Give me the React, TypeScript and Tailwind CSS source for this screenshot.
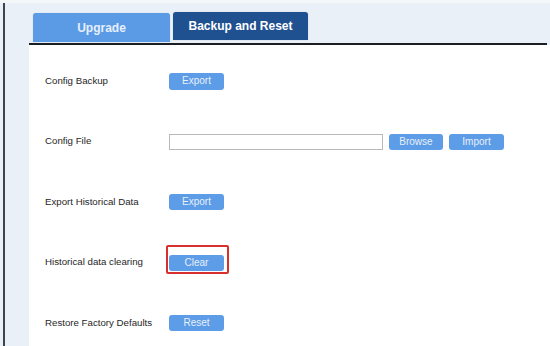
import React from "react";

const btn =
  "h-[16px] rounded-[3px] bg-[#5d9ce6] text-[#e8f0fb] text-[10px] leading-none flex items-center justify-center";

function Row({ label, children }: { label: string; children: React.ReactNode }) {
  return (
    <div className="h-[60.5px] flex items-center pl-[16px]">
      <div className="w-[124px] text-[9.7px] text-[#262626]">{label}</div>
      <div className="flex items-center">{children}</div>
    </div>
  );
}

export default function App() {
  return (
    <div
      className="w-[550px] h-[346px] bg-[#eaf0f7] flex flex-col overflow-hidden"
      style={{ fontFamily: '"Liberation Sans", Arial, sans-serif' }}
    >
      <div className="h-[3px] bg-[#f4f7fa] shrink-0" />
      <div className="flex flex-1">
        <div className="w-[3px]" />
        <div className="w-[2px] bg-[#3c4450]" />
        <div className="w-[24px]" />
        <div className="flex-1 flex flex-col">
          <div className="h-[40px] flex items-start pl-[4px] gap-[3px]">
            <div className="mt-[10px] h-[29px] w-[137px] rounded-t-[3px] bg-[#5b9be6] text-[#e6effc] text-[12px] font-bold flex items-center justify-center shadow-[0_0_1px_rgba(0,0,0,0.2)]">
              Upgrade
            </div>
            <div className="mt-[9px] h-[28px] w-[135px] rounded-t-[3px] bg-[#1f508f] text-white text-[12px] font-bold flex items-center justify-center shadow-[0_0_1px_rgba(0,0,0,0.3)]">
              Backup and Reset
            </div>
          </div>
          <div className="h-[2px] bg-[#1c1f22] mr-[3px]" />
          <div className="flex-1 bg-white pt-[6px]">
            <Row label="Config Backup">
              <div className={btn + " w-[55px] h-[17px]"}>Export</div>
            </Row>
            <Row label="Config File">
              <div className="w-[214px] h-[16px] border border-[#b9b9b9] bg-white" />
              <div className={btn + " w-[54px] ml-[6px]"}>Browse</div>
              <div className={btn + " w-[55px] ml-[6px]"}>Import</div>
            </Row>
            <Row label="Export Historical Data">
              <div className={btn + " w-[55px]"}>Export</div>
            </Row>
            <Row label="Historical data clearing">
              <div className="relative">
                <div className={btn + " w-[55px]"}>Clear</div>
                <div className="absolute left-[-3px] top-[-10px] w-[63px] h-[29px] border-2 border-[#d7302e] rounded-[2px]" />
              </div>
            </Row>
            <Row label="Restore Factory Defaults">
              <div className={btn + " w-[55px]"}>Reset</div>
            </Row>
          </div>
        </div>
      </div>
    </div>
  );
}
